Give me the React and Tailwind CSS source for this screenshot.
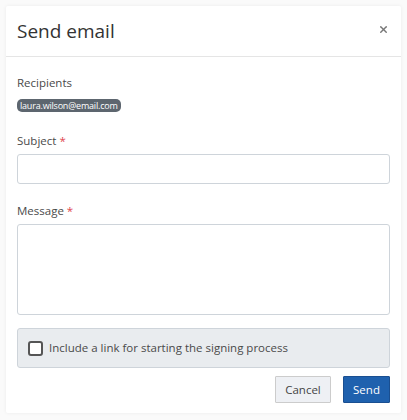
import { X } from 'lucide-react';

function Label({ children, required }) {
  return (
    <div className="h-[18px] text-[11.5px] leading-[18px] text-[#4a4a4a]">
      {children}
      {required && <span className="ml-[3px] text-[#e0464f]">*</span>}
    </div>
  );
}

export default function App() {
  return (
    <div className="min-h-[420px] bg-[#fafafa] p-[6px] font-['Open_Sans',sans-serif]">
      <div className="w-[395px] rounded-[2px] bg-white shadow-[0_0_4px_rgba(0,0,0,0.06)]">
        {/* header */}
        <div className="flex h-[51px] items-center justify-between border-b border-[#e5e5e5] pl-[11px] pr-[12px]">
          <h1 className="text-[19px] leading-none text-[#333]">Send email</h1>
          <X size={11} strokeWidth={3.2} className="-mt-[4px] text-[#777]" />
        </div>

        <div className="px-[11px] pb-[10px] pt-[17px]">
          <Label>Recipients</Label>
          <div className="mt-[7px] flex">
            <span className="h-[13px] rounded-[5px] bg-[#5d666f] px-[3px] text-[9px] leading-[13px] tracking-[-0.2px] text-white">
              laura.wilson@email.com
            </span>
          </div>

          <div className="mt-[20px]">
            <Label required>Subject</Label>
          </div>
          <input className="mt-[4px] block h-[30px] w-full rounded-[3px] border border-[#ced4da] bg-white outline-none" />

          <div className="mt-[18px]">
            <Label required>Message</Label>
          </div>
          <textarea className="mt-[4px] block h-[91px] w-full resize-none rounded-[3px] border border-[#ced4da] bg-white outline-none" />

          <label className="mt-[13px] flex h-[40px] items-center gap-[6px] rounded-[3px] border border-[#ced4da] bg-[#e9ecef] pl-[10px]">
            <span className="h-[15px] w-[15px] rounded-[3px] border-2 border-[#555] bg-white" />
            <span className="text-[11.5px] text-[#4a4a4a]">Include a link for starting the signing process</span>
          </label>

          <div className="mt-[8px] flex justify-end gap-[12px]">
            <button className="h-[27px] w-[56px] rounded-[1px] border border-[#ccc] bg-[#eef0f4] text-[11.5px] text-[#444]">
              Cancel
            </button>
            <button className="h-[27px] w-[47px] rounded-[1px] border border-[#1a4f91] bg-[#1f61ae] text-[11.5px] text-white">
              Send
            </button>
          </div>
        </div>
      </div>
    </div>
  );
}
